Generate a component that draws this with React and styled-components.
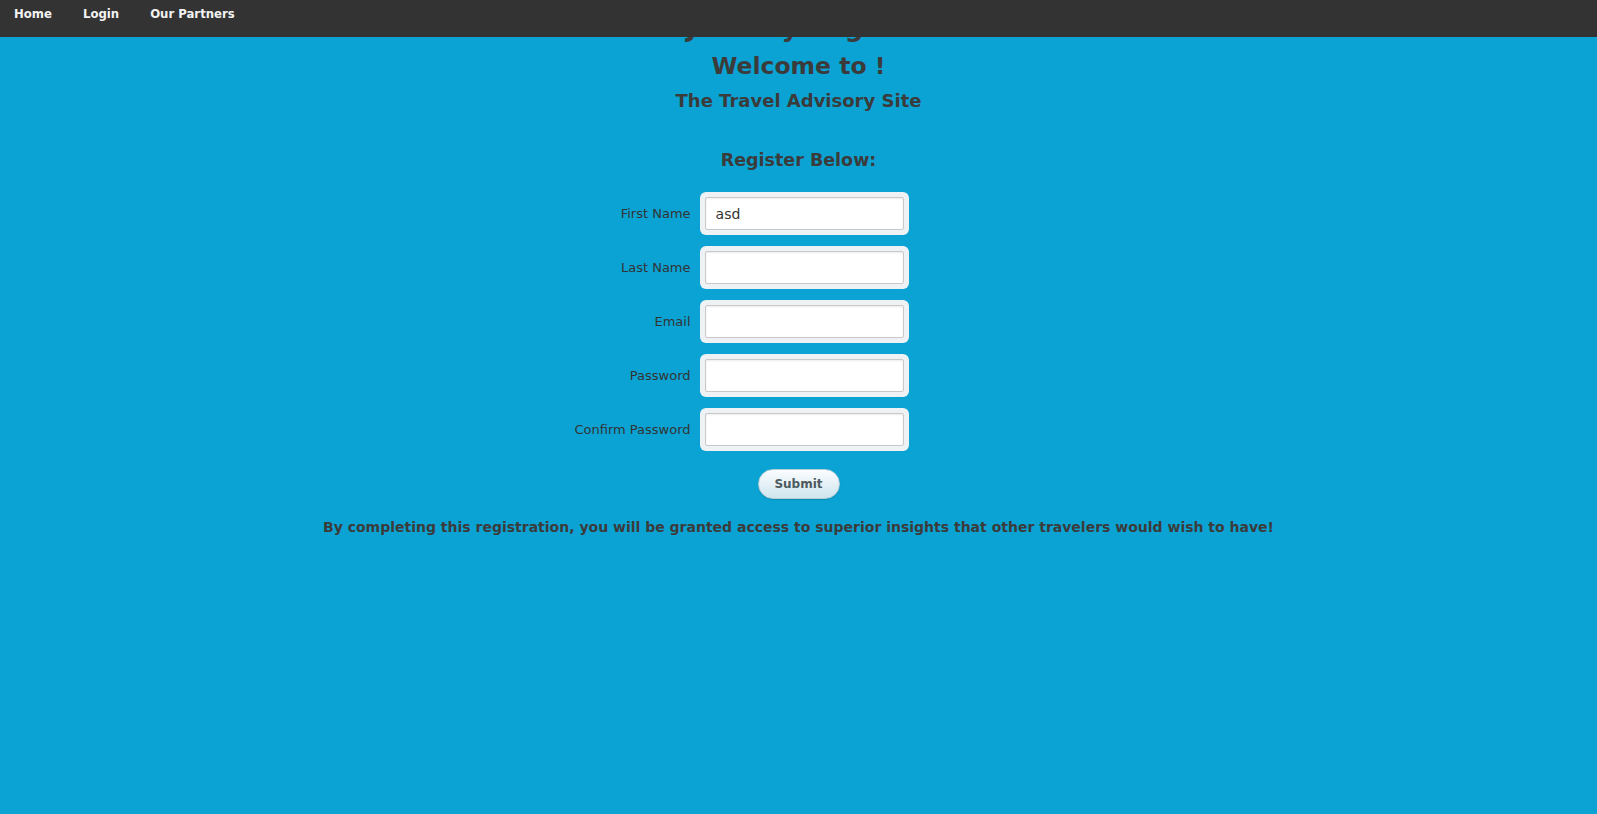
import React from 'react'
import styled, { createGlobalStyle } from 'styled-components'

const GlobalStyle = createGlobalStyle`
  html, body {
    margin: 0;
    padding: 0;
    background: #0ba3d4;
    min-height: 100%;
  }
  body {
    font-family: "DejaVu Sans", Verdana, sans-serif;
    color: #3b3b3b;
  }
`

const NavBar = styled.nav`
  position: fixed;
  top: 0;
  left: 0;
  right: 0;
  height: 37px;
  background: #333333;
  display: flex;
  align-items: flex-start;
  padding: 6px 0 0 14px;
  box-sizing: border-box;
  gap: 31px;
  z-index: 10;
`
const NavLink = styled.a`
  color: #f2f2f2;
  font-family: "DejaVu Sans Condensed", "DejaVu Sans", sans-serif;
  font-size: 13px;
  font-weight: bold;
  text-decoration: none;
`

const Page = styled.main`
  display: flex;
  flex-direction: column;
  align-items: center;
  padding-top: 12px;
  min-height: 100vh;
  box-sizing: border-box;
`
const HiddenTitle = styled.h1`
  margin: 0;
  font-size: 26px;
  line-height: 30px;
`
const Title = styled.h1`
  margin: 9px 0 0;
  font-size: 23.5px;
  line-height: 30px;
`
const Subtitle = styled.h2`
  margin: 8px 0 0;
  font-size: 18px;
  line-height: 24px;
`
const FormTitle = styled.h2`
  margin: 35px 0 0;
  font-size: 17.5px;
  line-height: 24px;
`
const Form = styled.form`
  display: grid;
  grid-template-columns: auto auto;
  column-gap: 9px;
  row-gap: 11px;
  align-items: center;
  margin-top: 20px;
  padding-right: 114px;
`
const Label = styled.label`
  font-size: 13px;
  text-align: right;
  color: #333;
`
const FieldWrap = styled.div`
  background: #eef2f5;
  border-radius: 6px;
  padding: 5px;
  width: 209px;
  box-sizing: border-box;
`
const Input = styled.input`
  display: block;
  width: 100%;
  height: 33px;
  box-sizing: border-box;
  border: 1px solid #c9c9c9;
  border-radius: 2px;
  background: #fff;
  box-shadow: inset 0 1px 2px rgba(0, 0, 0, 0.08);
  padding: 0 10px;
  font-family: "DejaVu Sans", Verdana, sans-serif;
  font-size: 14px;
  color: #333;
  outline: none;
`
const SubmitButton = styled.button`
  margin-top: 18px;
  width: 82px;
  height: 30px;
  border-radius: 15px;
  border: 1px solid #b6cdd6;
  background: linear-gradient(#fbfdfe, #cfe5ee);
  box-shadow: 0 1px 1px rgba(0, 0, 0, 0.15);
  font-family: "DejaVu Sans", Verdana, sans-serif;
  font-weight: bold;
  font-size: 12px;
  color: #4d5a60;
  cursor: pointer;
`
const Note = styled.p`
  margin: 20px 0 0;
  font-size: 14px;
  font-weight: bold;
  text-align: center;
`

const fields = [
  { label: 'First Name', type: 'text', value: 'asd' },
  { label: 'Last Name', type: 'text' },
  { label: 'Email', type: 'email' },
  { label: 'Password', type: 'password' },
  { label: 'Confirm Password', type: 'password' },
]

export default function App() {
  return (
    <>
      <GlobalStyle />
      <NavBar>
        <NavLink href="#">Home</NavLink>
        <NavLink href="#">Login</NavLink>
        <NavLink href="#">Our Partners</NavLink>
      </NavBar>
      <Page>
        <HiddenTitle>Your Journey Begins Here</HiddenTitle>
        <Title>Welcome to !</Title>
        <Subtitle>The Travel Advisory Site</Subtitle>
        <FormTitle>Register Below:</FormTitle>
        <Form onSubmit={e => e.preventDefault()}>
          {fields.map(f => (
            <React.Fragment key={f.label}>
              <Label>{f.label}</Label>
              <FieldWrap>
                <Input type={f.type} defaultValue={f.value || ''} />
              </FieldWrap>
            </React.Fragment>
          ))}
        </Form>
        <SubmitButton type="button">Submit</SubmitButton>
        <Note>
          By completing this registration, you will be granted access to superior insights that other travelers would wish to have!
        </Note>
      </Page>
    </>
  )
}
